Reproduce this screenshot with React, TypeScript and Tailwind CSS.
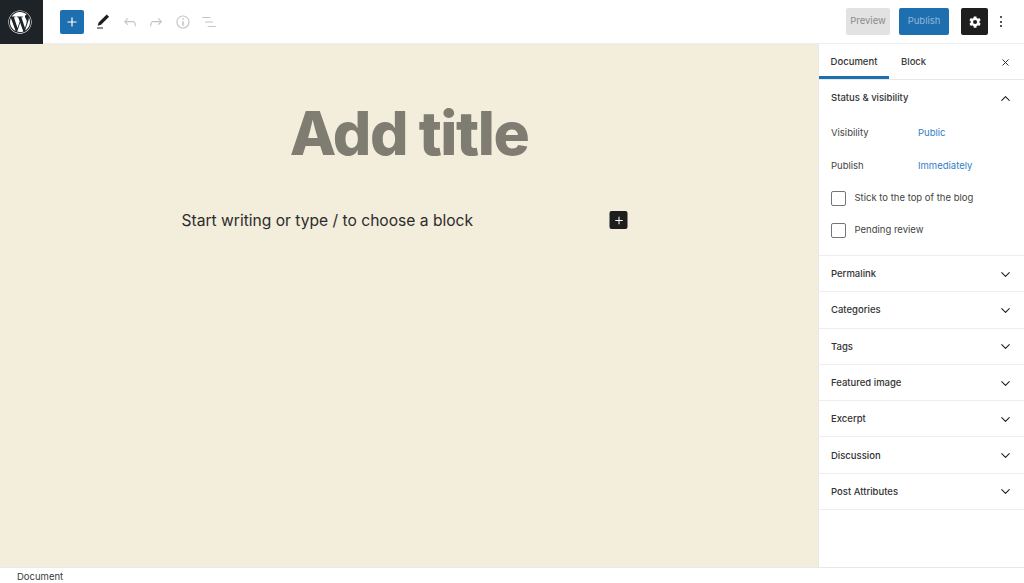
import React from "react";
import { FaWordpress } from "react-icons/fa";
import { ChevronDown, ChevronUp, X } from "lucide-react";

const panels = ["Permalink", "Categories", "Tags", "Featured image", "Excerpt", "Discussion", "Post Attributes"];

function ToolIcon({ d, className }: { d: string; className: string }) {
  return (
    <svg viewBox="0 0 24 24" className={className} fill="currentColor">
      <path d={d} fillRule="evenodd" />
    </svg>
  );
}

function PlusIcon({ className }: { className: string }) {
  return (
    <svg viewBox="0 0 24 24" className={className} fill="currentColor">
      <path d="M18 11.2h-5.2V6h-1.6v5.2H6v1.6h5.2V18h1.6v-5.2H18z" />
    </svg>
  );
}

function CheckRow({ label }: { label: string }) {
  return (
    <div className="flex h-[16px] items-center gap-[8.5px]">
      <span className="h-[15px] w-[15px] rounded-[2px] border border-[#757575] bg-white" />
      <span className="text-[9.5px] text-[#444444]">{label}</span>
    </div>
  );
}

export default function App() {
  return (
    <div className="flex h-[583px] w-[1024px] flex-col overflow-hidden bg-white font-['Inter',sans-serif]">
      <header className="flex h-[44px] shrink-0 items-center border-b border-[#eeeeee] bg-white">
        <div className="flex h-[44px] w-[43px] items-center justify-center bg-[#1e2327] pr-[3px] text-white">
          <FaWordpress className="h-[24px] w-[24px]" />
        </div>
        <button className="ml-[17px] flex h-[24px] w-[24px] items-center justify-center rounded-[2px] bg-[#1e6fb0] text-white">
          <PlusIcon className="h-[18px] w-[18px]" />
        </button>
        <div className="ml-[10px] flex items-center gap-[8.5px]">
          <ToolIcon
            className="h-[18px] w-[18px] text-[#1e1e1e]"
            d="M20.1 5.1L16.9 2 6.2 12.7l-1.3 4.4 4.5-1.3L20.1 5.1zM4 20.8h8v-1.5H4v1.5z"
          />
          <ToolIcon
            className="h-[18px] w-[18px] text-[#c4c4c4]"
            d="M18.3 11.7c-.6-.6-1.4-.9-2.3-.9H6.7l2.9-3.3-1.1-1-4.5 5L8.5 16l1-1-2.7-2.7H16c.5 0 .9.2 1.3.5 1 1 1 3.4 1 4.5v.3h1.5v-.2c0-1.5 0-4.3-1.5-5.7z"
          />
          <ToolIcon
            className="h-[18px] w-[18px] text-[#c4c4c4]"
            d="M15.6 6.5l-1.1 1 2.9 3.3H8c-.9 0-1.7.3-2.3.9-1.4 1.5-1.4 4.2-1.4 5.6v.2h1.5v-.3c0-1.1 0-3.5 1-4.5.3-.3.7-.5 1.3-.5h9.2L14.5 15l1.1 1.1 4.6-4.6-4.6-5z"
          />
          <ToolIcon
            className="h-[18px] w-[18px] text-[#c4c4c4]"
            d="M12 3.2c-4.8 0-8.8 3.9-8.8 8.8 0 4.8 3.9 8.8 8.8 8.8 4.8 0 8.8-3.9 8.8-8.8 0-4.8-4-8.8-8.8-8.8zm0 16c-4 0-7.2-3.3-7.2-7.2C4.8 8 8 4.8 12 4.8s7.2 3.3 7.2 7.2c0 4-3.2 7.2-7.2 7.2zM11 17h2v-6h-2v6zm0-8h2V7h-2v2z"
          />
          <ToolIcon
            className="h-[18px] w-[18px] text-[#c4c4c4]"
            d="M13.8 5.2H3v1.5h10.8V5.2zm-3.6 12v1.5H21v-1.5H10.2zm7.2-6H6.6v1.5h10.8v-1.5z"
          />
        </div>
        <div className="ml-auto flex items-center">
          <button className="flex h-[27px] w-[44px] items-center justify-center rounded-[2px] bg-[#e2e2e2] text-[9.5px] text-[#8a8a8a]">
            Preview
          </button>
          <button className="ml-[9px] flex h-[27px] w-[50px] items-center justify-center rounded-[2px] bg-[#1e6fb0] text-[9.5px] text-[#8fb7d8]">
            Publish
          </button>
          <button className="ml-[12px] flex h-[27px] w-[27px] items-center justify-center rounded-[2px] bg-[#1e1e1e] text-white">
            <ToolIcon
              className="h-[18px] w-[18px]"
              d="M18 12c0-.3 0-.6-.1-.9l1.7-1.3-1.8-3-2 .8c-.5-.4-1-.7-1.6-.9L13.9 4.5h-3.6l-.3 2.2c-.6.2-1.1.5-1.6.9l-2-.8-1.8 3 1.7 1.3c0 .3-.1.6-.1.9s0 .6.1.9l-1.7 1.3 1.8 3 2-.8c.5.4 1 .7 1.6.9l.3 2.2h3.6l.3-2.2c.6-.2 1.1-.5 1.6-.9l2 .8 1.8-3-1.7-1.3c.1-.3.1-.6.1-.9zm-5.9 2.7a2.7 2.7 0 110-5.4 2.7 2.7 0 010 5.4z"
            />
          </button>
          <div className="ml-[4px] flex w-[18px] flex-col items-center gap-[2.5px] pr-[1px]">
            <span className="h-[2px] w-[2px] rounded-full bg-[#1e1e1e]" />
            <span className="h-[2px] w-[2px] rounded-full bg-[#1e1e1e]" />
            <span className="h-[2px] w-[2px] rounded-full bg-[#1e1e1e]" />
          </div>
          <span className="w-[14px]" />
        </div>
      </header>

      <div className="flex min-h-0 flex-1">
        <main className="flex w-[818px] shrink-0 flex-col items-center bg-[#f3eddb]">
          <h1 className="mt-[52px] text-[60.5px] leading-[74px] font-extrabold tracking-[-1.5px] text-[#7f7c72]">
            Add title
          </h1>
          <div className="mt-[37px] flex w-[446px] -translate-x-[4.5px] items-center justify-between">
            <p className="translate-y-[1px] text-[15.6px] leading-[26px] text-[#2c2c2c]">
              Start writing or type / to choose a block
            </p>
            <button className="flex h-[18px] w-[18px] items-center justify-center rounded-[2px] bg-[#1e1e1e] text-white">
              <PlusIcon className="h-[15px] w-[15px]" />
            </button>
          </div>
        </main>

        <aside className="flex-1 border-l border-[#e8e8e8] bg-white text-[#1e1e1e]">
          <div className="flex h-[36px] items-stretch border-b border-[#e8e8e8] pr-[13px]">
            <div className="flex w-[70px] items-center justify-center border-b-[3px] border-[#1e6fb0] pt-[5px] text-[9.5px] font-medium text-[#333333]">
              Document
            </div>
            <div className="ml-[12px] flex items-center pt-[2px] text-[9.5px] font-medium text-[#3a3a3a]">Block</div>
            <X className="my-auto ml-auto h-[11px] w-[11px] translate-y-[1px]" strokeWidth={2} />
          </div>

          <section className="h-[176px] border-b border-[#eeeeee] pr-[11px] pl-[12px]">
            <div className="flex h-[37px] items-center justify-between">
              <h2 className="text-[9.5px] font-medium text-[#333333]">Status &amp; visibility</h2>
              <ChevronUp className="h-[15px] w-[15px]" strokeWidth={1.7} />
            </div>
            <div className="mt-[8px] flex h-[16px] items-center text-[9.5px] text-[#444444]">
              <span className="w-[87px]">Visibility</span>
              <span className="text-[#2f80c4]">Public</span>
            </div>
            <div className="mt-[17px] flex h-[16px] items-center text-[9.5px] text-[#444444]">
              <span className="w-[87px]">Publish</span>
              <span className="text-[#2f80c4]">Immediately</span>
            </div>
            <div className="mt-[16px] flex flex-col gap-[16.5px]">
              <CheckRow label="Stick to the top of the blog" />
              <CheckRow label="Pending review" />
            </div>
          </section>

          {panels.map((name) => (
            <div key={name} className="flex h-[36.3px] items-center justify-between border-b border-[#eeeeee] pt-[1px] pr-[11px] pl-[12px]">
              <span className="text-[9.5px] font-medium text-[#333333]">{name}</span>
              <ChevronDown className="h-[15px] w-[15px]" strokeWidth={1.7} />
            </div>
          ))}
        </aside>
      </div>

      <footer className="flex h-[16px] shrink-0 items-center border-t border-[#e8e8e8] bg-white pt-[3px] pl-[17px] text-[9.5px] text-[#3a3a3a]">
        Document
      </footer>
    </div>
  );
}
